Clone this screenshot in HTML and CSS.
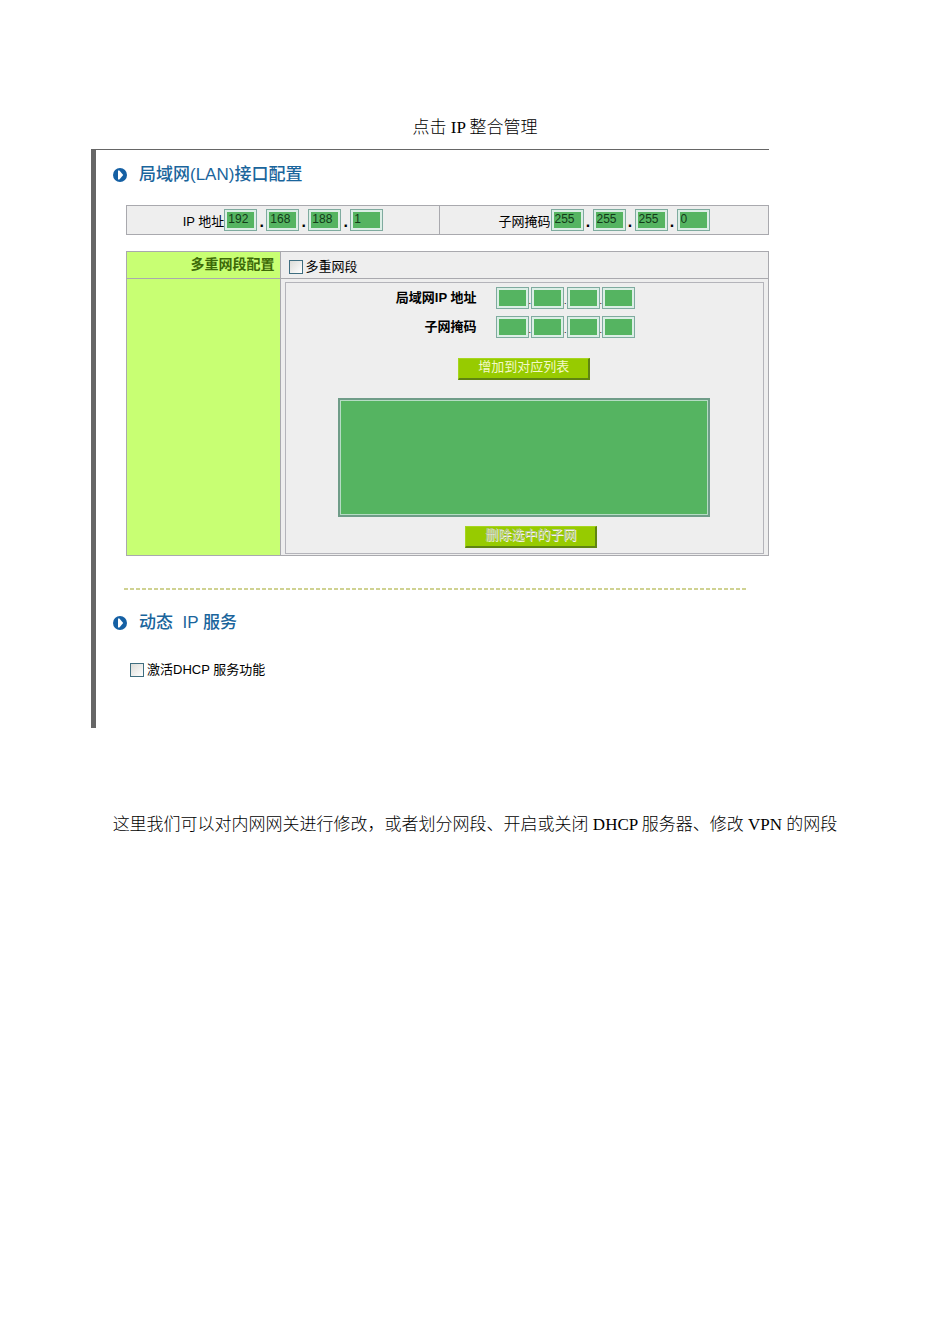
FILE: index.html
```html
<!DOCTYPE html>
<html lang="zh-CN">
  <head>
    <meta charset="utf-8">
    <title>IP 整合管理</title>
    <link rel="stylesheet" href="styles.css">
  </head>
  <body>
    <p class="caption">点击 IP 整合管理</p>

    <form class="panel">
      <h2 class="heading">
        <svg class="bullet" viewBox="0 0 14 14" aria-hidden="true">
          <circle cx="7" cy="7" r="7" fill="#1560a4"/>
          <path d="M5 2.4 H6.4 L10.2 7 L6.4 11.6 H5 Z" fill="#fff"/>
        </svg>
        局域网(LAN)接口配置
      </h2>

      <div class="lan">
        <div class="lan-cell">
          <label for="ip1">IP 地址</label>
          <input class="octet" id="ip1" value="192"><b class="dot">.</b>
          <input class="octet" aria-label="IP 2" value="168"><b class="dot">.</b>
          <input class="octet" aria-label="IP 3" value="188"><b class="dot">.</b>
          <input class="octet" aria-label="IP 4" value="1">
        </div>
        <div class="lan-cell">
          <label for="mask1">子网掩码</label>
          <input class="octet" id="mask1" value="255"><b class="dot">.</b>
          <input class="octet" aria-label="掩码 2" value="255"><b class="dot">.</b>
          <input class="octet" aria-label="掩码 3" value="255"><b class="dot">.</b>
          <input class="octet" aria-label="掩码 4" value="0">
        </div>
      </div>

      <div class="multi">
        <div class="multi-title">多重网段配置</div>
        <div class="multi-switch">
          <input class="check" type="checkbox" id="multi">
          <label for="multi">多重网段</label>
        </div>
        <div class="multi-side"></div>
        <div class="multi-body">
          <div class="subnet">
            <div class="field">
              <label for="sub1">局域网IP 地址</label>
              <div class="octets">
                <input class="octet" id="sub1"><span>.</span>
                <input class="octet" aria-label="地址 2"><span>.</span>
                <input class="octet" aria-label="地址 3"><span>.</span>
                <input class="octet" aria-label="地址 4">
              </div>
            </div>
            <div class="field">
              <label for="submask1">子网掩码</label>
              <div class="octets">
                <input class="octet" id="submask1"><span>.</span>
                <input class="octet" aria-label="子网掩码 2"><span>.</span>
                <input class="octet" aria-label="子网掩码 3"><span>.</span>
                <input class="octet" aria-label="子网掩码 4">
              </div>
            </div>
            <button class="btn" type="button">增加到对应列表</button>
            <select class="list" size="6" aria-label="子网列表"></select>
            <div class="remove">
              <button class="btn" type="button" disabled>删除选中的子网</button>
            </div>
          </div>
        </div>
      </div>

      <hr class="divider">

      <h2 class="heading">
        <svg class="bullet" viewBox="0 0 14 14" aria-hidden="true">
          <circle cx="7" cy="7" r="7" fill="#1560a4"/>
          <path d="M5 2.4 H6.4 L10.2 7 L6.4 11.6 H5 Z" fill="#fff"/>
        </svg>
        动态&nbsp; IP 服务
      </h2>

      <div class="dhcp">
        <input class="check" type="checkbox" id="dhcp">
        <label for="dhcp">激活DHCP 服务功能</label>
      </div>
    </form>

    <p class="caption">这里我们可以对内网网关进行修改，或者划分网段、开启或关闭 DHCP 服务器、修改 VPN 的网段</p>
  </body>
</html>
```
FILE: styles.css
```css
* {
  box-sizing: border-box;
}

body {
  margin: 0;
  padding: 116px 91px 0;
  background: #fff;
  color: #000;
  font-family: "Liberation Sans", "Noto Sans CJK SC", sans-serif;
  font-size: 13px;
  line-height: 16px;
}

.caption {
  margin: 0 -20px;
  font-family: "Liberation Serif", "Noto Sans CJK SC", serif;
  font-size: 17px;
  font-weight: 300;
  line-height: 24px;
  text-align: center;
}

.panel {
  margin: 9px 90px 85px 0;
  padding: 12px 0 50px 17px;
  border-top: 1px solid #666;
  border-left: 5px solid #666;
}

.heading {
  display: flex;
  align-items: center;
  gap: 12px;
  margin: 0;
  color: #1a659c;
  font-size: 17px;
  font-weight: 500;
  line-height: 26px;
}

.bullet {
  width: 14px;
  height: 14px;
}

.lan {
  display: grid;
  grid-template-columns: 313fr 330fr;
  margin: 17px 0 16px 13px;
  border: 1px solid #a9a9ae;
  background: #eee;
}

.lan-cell {
  display: flex;
  justify-content: center;
  align-items: center;
  padding: 3px 0;
}

.lan-cell + .lan-cell {
  border-left: 1px solid #a9a9ae;
}

.lan-cell label {
  padding-top: 4px;
}

.dot {
  width: 9px;
  padding-top: 4px;
  font-size: 16px;
  text-align: center;
}

.octet {
  width: 33px;
  height: 22px;
  padding: 0 3px 2px;
  border: 1px solid #7fab9f;
  outline: 2px solid #dceee6;
  outline-offset: -3px;
  background: #55b461;
  color: #123a18;
  font-family: "Liberation Sans", sans-serif;
  font-size: 12px;
}

.multi {
  display: grid;
  grid-template-columns: 154fr 489fr;
  grid-template-rows: 27px auto;
  margin-left: 13px;
  border: 1px solid #a9a9ae;
  background: #eee;
}

.multi-title,
.multi-side {
  border-right: 1px solid #a9a9ae;
  background: #c8ff73;
}

.multi-title {
  padding: 4px 5px 0;
  color: #3c6a08;
  font-size: 14px;
  font-weight: bold;
  text-align: right;
}

.multi-title,
.multi-switch {
  border-bottom: 1px solid #a9a9ae;
}

.multi-switch,
.dhcp {
  display: flex;
  align-items: center;
  gap: 3px;
}

.multi-switch {
  padding: 4px 8px 0;
}

.check {
  appearance: none;
  width: 14px;
  height: 14px;
  margin: 0;
  border: 1px solid #3f6e80;
  background: linear-gradient(135deg, #dcdcd8, #fff);
}

.multi-body {
  padding: 3px 4px 1px;
}

.subnet {
  display: flex;
  flex-direction: column;
  align-items: center;
  padding: 4px 0 5px;
  border: 1px solid #b4b4ba;
}

.field {
  display: grid;
  grid-template-columns: 40% 1fr;
  align-items: center;
  gap: 19px;
  width: 100%;
  margin-bottom: 7px;
  font-weight: bold;
  text-align: right;
}

.octets {
  display: flex;
  align-items: flex-end;
  font-size: 9px;
  font-weight: normal;
}

.btn {
  width: 132px;
  height: 22px;
  margin-top: 13px;
  padding: 0 0 3px;
  border: 1px solid #a6d61e;
  border-right: 2px solid #5f8412;
  border-bottom: 2px solid #5f8412;
  background: #97cb00;
  color: #f3f9c8;
  font: 13px/16px "Liberation Sans", "Noto Sans CJK SC", sans-serif;
}

.btn:disabled {
  color: #b9c39a;
  text-shadow: 1px 1px #f4f8e4;
}

.list {
  width: 78%;
  height: 119px;
  margin-top: 18px;
  border: 2px solid #6f9c88;
  border-radius: 0;
  outline: 1px solid #b5dcc4;
  outline-offset: -3px;
  background: #55b461;
}

.remove {
  margin-top: -4px;
  padding-left: 14px;
}

.divider {
  height: 2px;
  margin: 32px 22px 20px 11px;
  border: 0;
  background: repeating-linear-gradient(90deg, #cfd292 0 4px, #fff 4px 6px);
}

.dhcp {
  margin: 26px 0 0 17px;
}
```
